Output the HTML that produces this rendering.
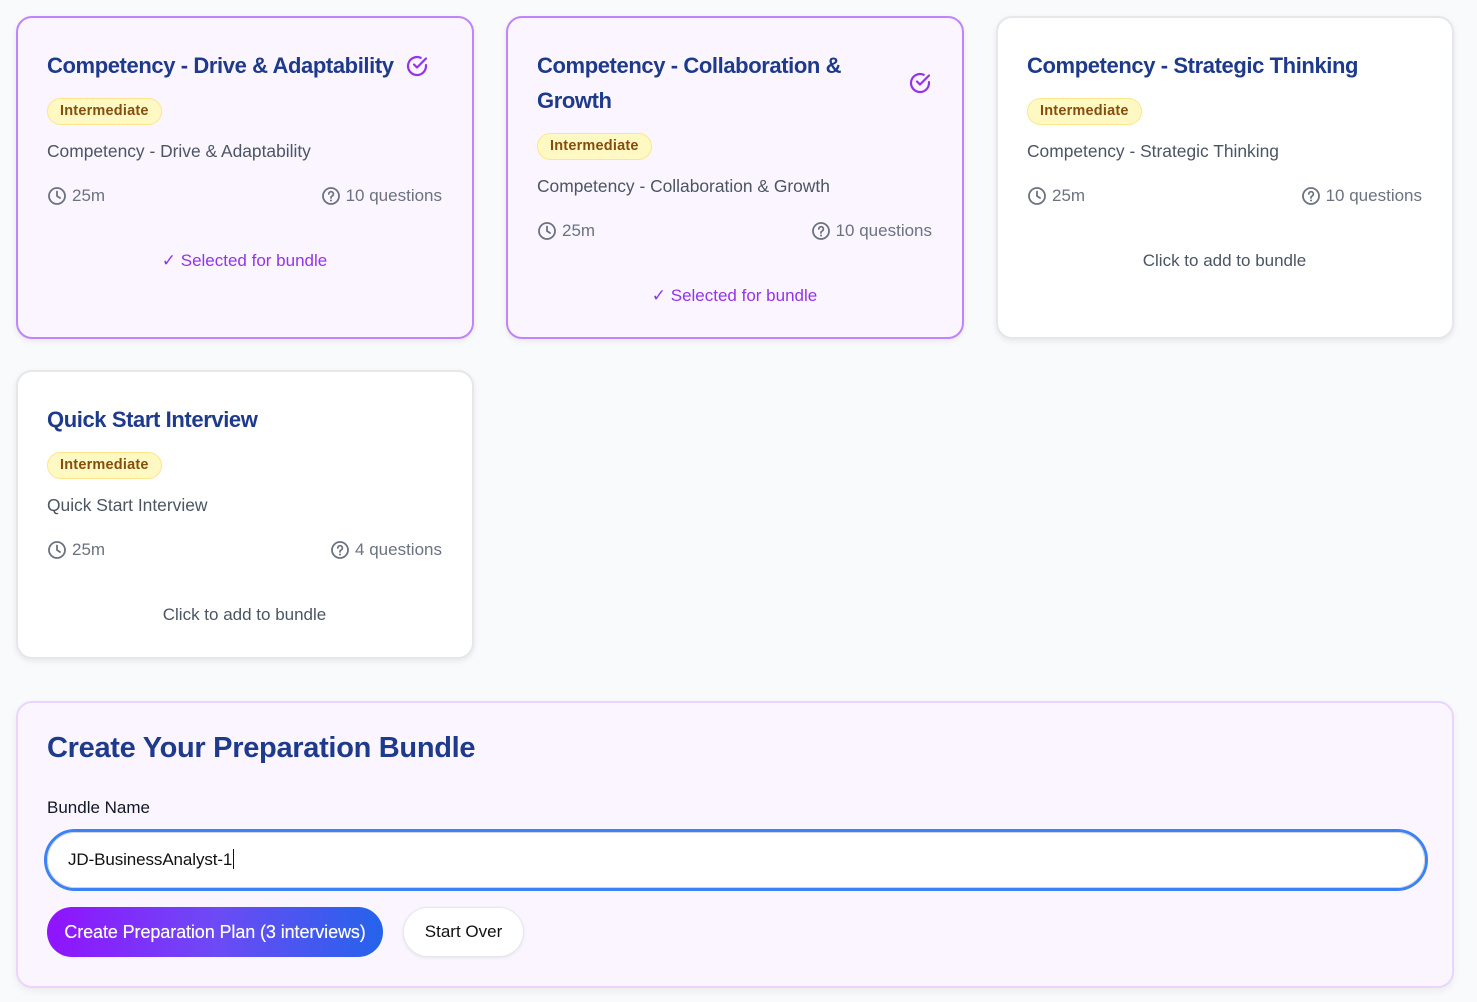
<!DOCTYPE html>
<html><head><meta charset="utf-8"><style>
*{box-sizing:border-box;margin:0;padding:0}
body{width:1477px;height:1002px;background:#f9fafb;font-family:"Liberation Sans",Arial,sans-serif;position:relative;overflow:hidden}
.card{position:absolute;width:458px;border-radius:16px;background:#fff;border:2px solid #e5e7eb;padding:30px 30px 0 29px;box-shadow:0 2px 6px rgba(0,0,0,.08)}
.card.sel{background:#faf5ff;border-color:#c084fc}
.t{display:flex;align-items:center;gap:11px}
.t h3{font-size:22px;line-height:35px;font-weight:700;color:#1e3a8a;letter-spacing:-0.4px}
.t svg{flex:none}
.badge{display:inline-block;margin-top:15px;height:27px;line-height:25px;padding:0 12px;border-radius:14px;background:#fef9c3;border:1px solid #fde68a;color:#854d0e;font-size:14.5px;font-weight:700;letter-spacing:0.2px}
.desc{margin-top:15px;font-size:17.4px;line-height:22px;color:#4b5563}
.meta{margin-top:23px;display:flex;justify-content:space-between;font-size:17px;line-height:22px;color:#6b7280}
.meta span{display:flex;align-items:center;gap:5px}
.foot{margin-top:43px;text-align:center;font-size:17px;line-height:22px;color:#4b5563;padding-bottom:33px}
.sel .foot{color:#9333ea}
.bundle{position:absolute;left:16px;top:701px;width:1438px;height:287px;background:#faf5ff;border:2px solid #e9d5ff;border-radius:16px;box-shadow:0 3px 8px rgba(0,0,0,.06)}
</style></head><body>
<svg width="0" height="0" style="position:absolute"><defs>
<symbol id="clk" viewBox="0 0 20 20"><circle cx="10" cy="10" r="8" fill="none" stroke="#6b7280" stroke-width="1.8"/><path d="M10 5.5V10l3 2" fill="none" stroke="#6b7280" stroke-width="1.8" stroke-linecap="round"/></symbol>
<symbol id="q" viewBox="0 0 20 20"><circle cx="10" cy="10" r="8" fill="none" stroke="#6b7280" stroke-width="1.8"/><path d="M7.8 8a2.3 2.3 0 1 1 3.2 2.1c-.7.3-1 .8-1 1.5v.4" fill="none" stroke="#6b7280" stroke-width="1.7" stroke-linecap="round"/><circle cx="10" cy="14.5" r="1" fill="#6b7280"/></symbol>
<symbol id="ck" viewBox="0 0 24 24"><path d="M21 11.1V12a9 9 0 1 1-5.3-8.2" fill="none" stroke="#9333ea" stroke-width="2.2" stroke-linecap="round"/><path d="M21 4.5 12 13.5l-3-3" fill="none" stroke="#9333ea" stroke-width="2.2" stroke-linecap="round" stroke-linejoin="round"/></symbol>
</defs></svg>

<div class="card sel" style="left:16px;top:16px;height:323px">
<div class="t"><h3>Competency - Drive &amp; Adaptability</h3><svg width="24" height="24"><use href="#ck"/></svg></div>
<span class="badge">Intermediate</span>
<div class="desc">Competency - Drive &amp; Adaptability</div>
<div class="meta"><span><svg width="20" height="20"><use href="#clk"/></svg>25m</span><span><svg width="20" height="20"><use href="#q"/></svg>10 questions</span></div>
<div class="foot">✓ Selected for bundle</div>
</div>

<div class="card sel" style="left:506px;top:16px;height:323px">
<div class="t"><h3>Competency - Collaboration &amp; Growth</h3><svg width="24" height="24"><use href="#ck"/></svg></div>
<span class="badge">Intermediate</span>
<div class="desc">Competency - Collaboration &amp; Growth</div>
<div class="meta"><span><svg width="20" height="20"><use href="#clk"/></svg>25m</span><span><svg width="20" height="20"><use href="#q"/></svg>10 questions</span></div>
<div class="foot">✓ Selected for bundle</div>
</div>

<div class="card" style="left:996px;top:16px;height:323px">
<div class="t"><h3>Competency - Strategic Thinking</h3></div>
<span class="badge">Intermediate</span>
<div class="desc">Competency - Strategic Thinking</div>
<div class="meta"><span><svg width="20" height="20"><use href="#clk"/></svg>25m</span><span><svg width="20" height="20"><use href="#q"/></svg>10 questions</span></div>
<div class="foot">Click to add to bundle</div>
</div>

<div class="card" style="left:16px;top:370px;height:289px">
<div class="t"><h3>Quick Start Interview</h3></div>
<span class="badge">Intermediate</span>
<div class="desc">Quick Start Interview</div>
<div class="meta"><span><svg width="20" height="20"><use href="#clk"/></svg>25m</span><span><svg width="20" height="20"><use href="#q"/></svg>4 questions</span></div>
<div class="foot">Click to add to bundle</div>
</div>

<div class="bundle">
<div style="position:absolute;left:29px;top:28px;font-size:29px;line-height:34px;font-weight:700;color:#1e3a8a;letter-spacing:-0.3px">Create Your Preparation Bundle</div>
<div style="position:absolute;left:29px;top:94px;font-size:17px;line-height:22px;color:#111827">Bundle Name</div>
<div style="position:absolute;left:26px;top:126px;width:1384px;height:62px;border:3px solid #3b82f6;border-radius:31px;background:#fff">
<div style="position:absolute;inset:0;border:1px solid #d1d5db;border-radius:28px"></div>
<div style="position:absolute;left:21px;top:17px;font-size:17px;line-height:22px;color:#111;letter-spacing:-0.1px">JD-BusinessAnalyst-1<span style="display:inline-block;width:1px;height:20px;background:#111;vertical-align:-4px;margin-left:1px"></span></div>
</div>
<div style="position:absolute;left:29px;top:204px;width:336px;height:50px;border-radius:25px;background:linear-gradient(90deg,#9013fe,#6d4af5 50%,#2563eb);color:#fff;font-size:18px;line-height:50px;text-align:center;letter-spacing:-0.1px;text-shadow:0 0 0.4px #fff">Create Preparation Plan (3 interviews)</div>
<div style="position:absolute;left:385px;top:204px;width:121px;height:50px;border-radius:25px;background:#fff;border:1px solid #e5e7eb;box-shadow:0 1px 3px rgba(0,0,0,.08);color:#111;font-size:17px;line-height:48px;text-align:center">Start Over</div>
</div>
</body></html>
